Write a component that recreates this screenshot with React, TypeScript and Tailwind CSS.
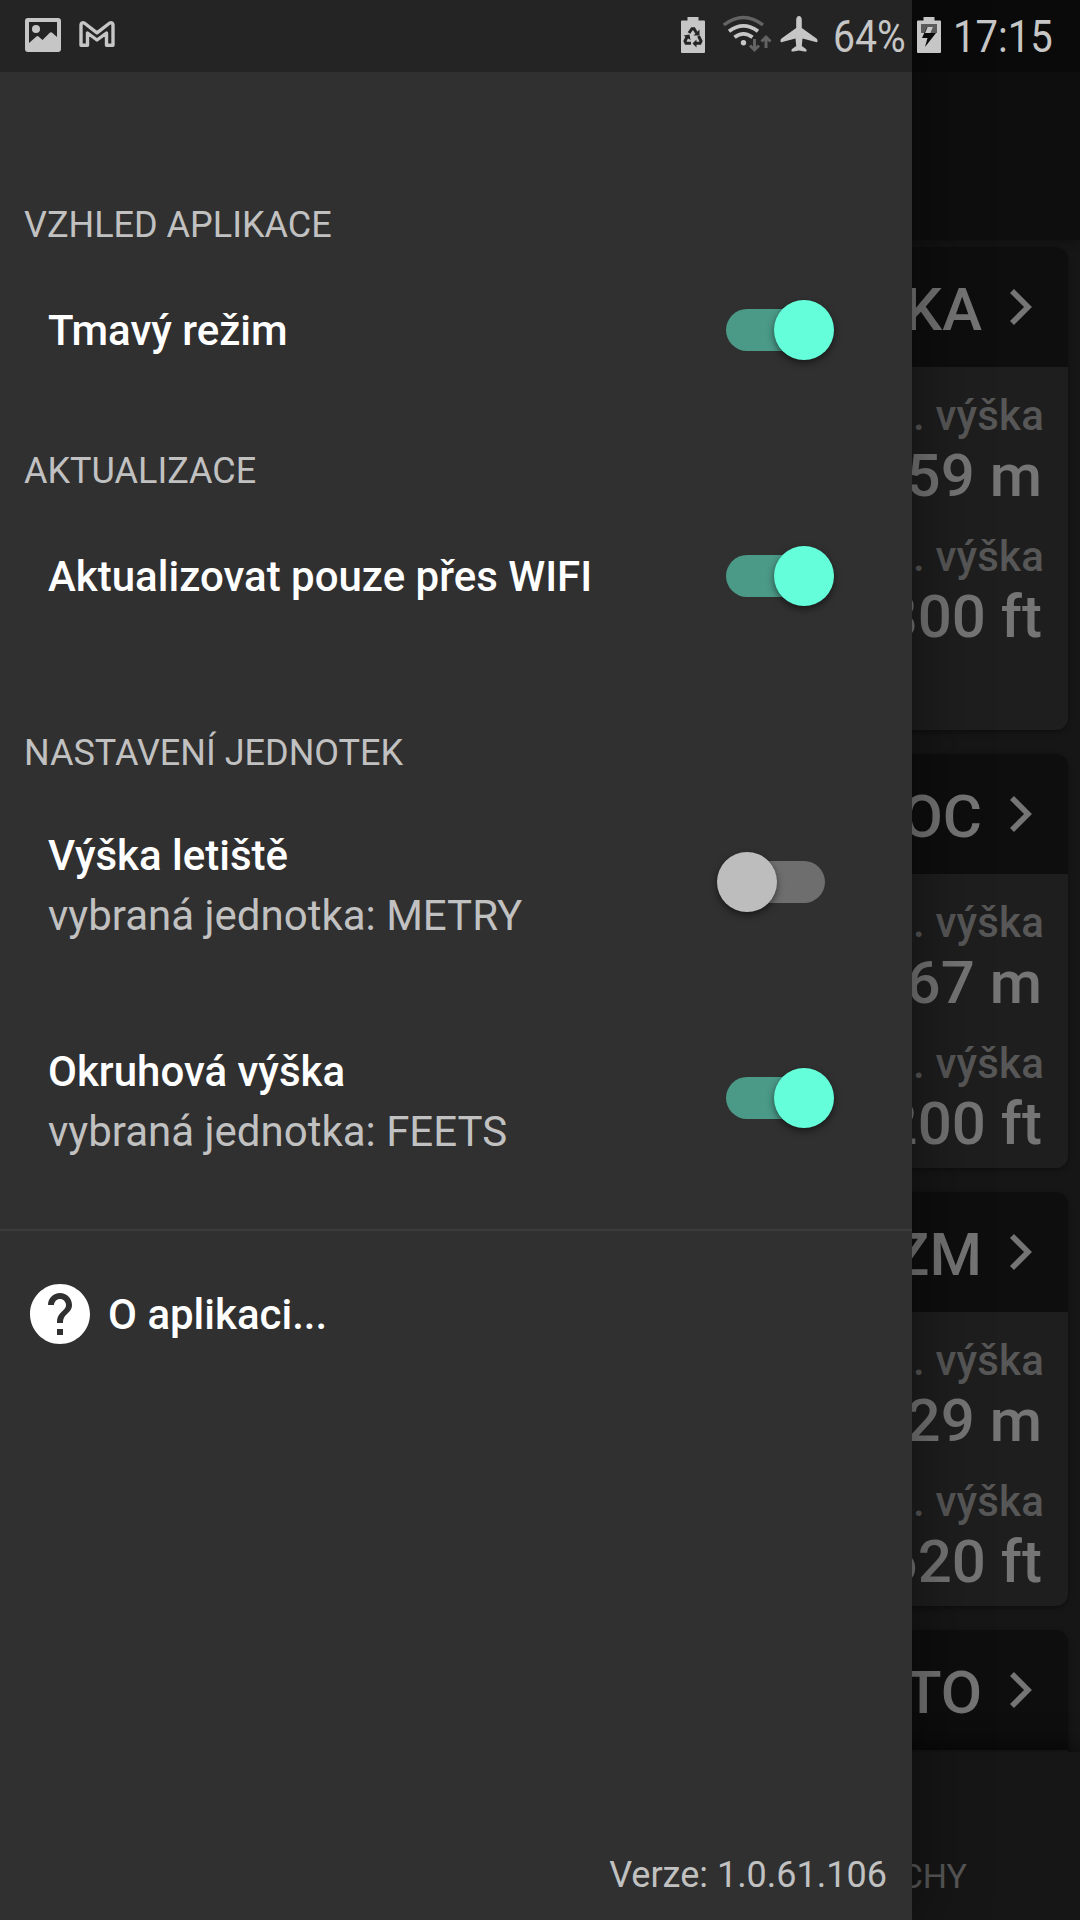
import React from "react";
import { MdHelp } from "react-icons/md";

function StatusIconsLeft() {
  return (
    <div className="flex items-center">
      <svg className="ml-[25px] h-[72px] w-[36px]" viewBox="0 0 36 72" fill="#c6c6c6">
        <path fillRule="evenodd" d="M3 18H33Q36 18 36 21V49Q36 52 33 52H3Q0 52 0 49V21Q0 18 3 18ZM4 22V43L11.500 36.500Q12.500 35.500 13.500 36.500L17.500 40L24.500 33Q26 31.500 27.500 33L32 37V22Z" />
        <circle cx="11" cy="29" r="4" />
      </svg>
      <svg className="ml-[18px] h-[72px] w-[36px]" viewBox="0 0 36 72" fill="none" stroke="#c6c6c6" strokeWidth="3.400" strokeLinejoin="round">
        <path d="M2 45.300V25Q2.300 22 5.300 23L18 32.800L30.700 23Q33.700 22 34 25V45.300H27.500V33L18 40L8.500 33V45.300Z" />
      </svg>
    </div>
  );
}

function StatusIconsRight() {
  return (
    <div className="flex items-center">
      <svg className="h-[72px] w-[24px]" viewBox="0 0 24 72">
        <path d="M6.500 17H17.500V20.500H23Q24 20.500 24 21.500V52Q24 53 23 53H1Q0 53 0 52V21.500Q0 20.500 1 20.500H6.500Z" fill="#c6c6c6" />
        <g fill="none" stroke="#242424" strokeWidth="3">
          <path d="M8 33L11 28.700H13L15.500 33M17.500 36L20 41L19 43.300H14M10 43.300H5L4 41L6 37" />
        </g>
        <path d="M18.500 29.500V35.500H12.500ZM15.500 39.500V47.500L11.500 43.500ZM2.500 35.500L8.500 34.500L9.500 40Z" fill="#242424" />
      </svg>
      <svg className="ml-[18px] h-[72px] w-[50px]" viewBox="0 0 50 72" fill="none" strokeWidth="3.400">
        <path d="M0.800 25Q20.500 10 40 25" stroke="#636363" />
        <path d="M6 31.300Q20.500 20.500 35 31.300M11.500 37.300Q20.500 30.500 29.500 37.300" stroke="#c6c6c6" strokeWidth="3.800" />
        <circle cx="20.500" cy="42.800" r="2.700" fill="#c6c6c6" />
        <path d="M31.500 39V50M27 45.500L31.500 50L36 45.500M43 48V37M38.500 41.500L43 37L47.500 41.500" stroke="#636363" strokeWidth="3" />
      </svg>
      <svg className="ml-[7px] h-[72px] w-[38px]" viewBox="0 0 38 72" fill="#c6c6c6">
        <path d="M19 16C20.800 16 21.800 17.800 21.800 20V28L36.500 38.500Q37.800 39.500 37.500 41.500Q37.200 42.500 35.800 42L22.500 38.500L21.800 46L26 49Q27 50.200 26.500 51.200Q26 51.800 24.500 51.500L19 50.500L13.500 51.500Q12 51.800 11.500 51.200Q11 50.200 12 49L16.200 46L15.500 38.500L2.200 42Q0.800 42.500 0.500 41.500Q0.200 39.500 1.500 38.500L16.200 28V20C16.200 17.800 17.200 16 19 16Z" />
      </svg>
    </div>
  );
}

function StatusBar() {
  return (
    <header className="absolute inset-x-0 top-0 z-20 flex h-[72px] items-center bg-black/25 text-[#c6c6c6]">
      <StatusIconsLeft />
      <div className="ml-[566px]">
        <StatusIconsRight />
      </div>
      <span className="ml-[15px] w-[74px] origin-left scale-x-[0.87] pt-[2px] text-[45px] leading-[72px] whitespace-nowrap">64%</span>
      <svg className="ml-[10px] h-[72px] w-[24px]" viewBox="0 0 24 72">
        <path d="M6.500 17H17.500V20.500H23Q24 20.500 24 21.500V52Q24 53 23 53H1Q0 53 0 52V21.500Q0 20.500 1 20.500H6.500Z" fill="#c6c6c6" />
        <path d="M4 24H20V33H4Z" fill="#5c5c5c" />
        <path d="M10 27H16L13.500 33H19L8 47L10.500 38H5Z" fill="#0a0a0a" />
        <path d="M10.500 27H16L13.500 33H8Z" fill="#c6c6c6" />
      </svg>
      <span className="ml-[12px] origin-left scale-x-[0.89] pt-[2px] text-[45px] leading-[72px] whitespace-nowrap">17:15</span>
    </header>
  );
}

function Switch({ on }: { on: boolean }) {
  return on ? (
    <div className="mr-[78px] flex h-[60px] w-[108px] items-center">
      <div className="h-[42px] w-[102px] rounded-full bg-[#4b9987]" />
      <div className="-ml-[54px] size-[60px] shrink-0 rounded-full bg-[#64ffda] shadow-[0_3px_7px_rgba(0,0,0,0.5)]" />
    </div>
  ) : (
    <div className="mr-[87px] flex h-[60px] w-[108px] items-center">
      <div className="z-10 size-[60px] shrink-0 rounded-full bg-[#bdbdbd] shadow-[0_3px_7px_rgba(0,0,0,0.5)]" />
      <div className="-ml-[54px] h-[42px] w-[102px] shrink-0 rounded-full bg-[#6e6e6e]" />
    </div>
  );
}

function SectionTitle({ children }: { children: React.ReactNode }) {
  return <h2 className="h-[42px] pl-[24px] text-[36px] leading-[42px] text-[#c1c1c1]">{children}</h2>;
}

function Setting({ title, detail, on }: { title: string; detail?: string; on: boolean }) {
  return (
    <div className="flex items-center justify-between pl-[48px] text-[42px]">
      <div className={detail ? "" : "pt-[2px]"}>
        <div className="leading-[48px] font-medium text-white">{title}</div>
        {detail && <div className="mt-[12px] leading-[48px] text-[#c1c1c1]">{detail}</div>}
      </div>
      <div className={detail ? "pb-[8px]" : ""}>
        <Switch on={on} />
      </div>
    </div>
  );
}

function Drawer() {
  return (
    <aside className="absolute inset-y-0 left-0 z-10 flex w-[912px] flex-col bg-[#303030] pt-[204px] shadow-[0_0_70px_rgba(0,0,0,0.45)]">
      <SectionTitle>VZHLED APLIKACE</SectionTitle>
      <div className="mt-[54px]">
        <Setting title="Tmavý režim" on />
      </div>
      <div className="mt-[90px]">
        <SectionTitle>AKTUALIZACE</SectionTitle>
      </div>
      <div className="mt-[54px]">
        <Setting title="Aktualizovat pouze přes WIFI" on />
      </div>
      <div className="mt-[126px]">
        <SectionTitle>NASTAVENÍ JEDNOTEK</SectionTitle>
      </div>
      <div className="mt-[58px]">
        <Setting title="Výška letiště" detail="vybraná jednotka: METRY" on={false} />
      </div>
      <div className="mt-[108px]">
        <Setting title="Okruhová výška" detail="vybraná jednotka: FEETS" on />
      </div>
      <div className="mt-[73px] h-[2px] bg-[#3c3c3c]" />
      <div className="mt-[48px] flex h-[70px] items-center pl-[24px]">
        <MdHelp className="size-[72px] text-white" />
        <span className="ml-[12px] pt-[2px] text-[42px] leading-[48px] font-medium text-white">O aplikaci...</span>
      </div>
      <div className="mt-auto mb-[24px] pr-[25px] text-right text-[36px] leading-[42px] text-[#c1c1c1]">Verze: 1.0.61.106</div>
    </aside>
  );
}

const airfields = [
  { name: "KA", height: "259 m", circuit: "1800 ft", box: "h-[483px]" },
  { name: "OC", height: "267 m", circuit: "1200 ft", box: "h-[414px]" },
  { name: "ZM", height: "229 m", circuit: "1620 ft", box: "h-[414px]" },
  { name: "TO", height: "", circuit: "", box: "h-[414px]" },
];

function AirfieldCard({ name, height, circuit, box }: (typeof airfields)[number]) {
  return (
    <article className={`${box} shrink-0 overflow-hidden rounded-[12px] bg-[#1e1e1e] text-right font-medium shadow-[0_2px_5px_rgba(0,0,0,0.35)]`}>
      <div className="flex h-[120px] items-center justify-end bg-[#0e0e0e] pr-[35px] text-[#757575]">
        <span className="pt-[5px] text-[60px] leading-[70px]">{name}</span>
        <svg className="ml-[27px] h-[38px] w-[24px]" viewBox="0 0 24 38" fill="none" stroke="#757575" strokeWidth="5.600">
          <path d="M3 3L19 19L3 35" />
        </svg>
      </div>
      {height && (
        <div className="pt-[25px] pr-[24px]">
          <div className="text-[42px] leading-[48px] tracking-[0.2px] text-[#575757]">. výška</div>
          <div className="mt-[3px] pr-[2px] text-[60px] leading-[66px] text-[#757575]">{height}</div>
          <div className="mt-[24px] text-[42px] leading-[48px] tracking-[0.2px] text-[#575757]">. výška</div>
          <div className="mt-[3px] pr-[2px] text-[60px] leading-[66px] text-[#757575]">{circuit}</div>
        </div>
      )}
    </article>
  );
}

export default function App() {
  return (
    <div className="relative h-[1920px] w-[1080px] overflow-hidden bg-[#161616] font-['Roboto',sans-serif]">
      <main className="flex h-full flex-col">
        <div className="h-[240px] shrink-0 bg-[#0e0e0e] shadow-[0_0_10px_rgba(0,0,0,0.4)]" />
        <div className="flex h-[1512px] flex-col gap-[24px] overflow-hidden px-[12px] pt-[7px]">
          {airfields.map((a) => (
            <AirfieldCard key={a.name} {...a} />
          ))}
        </div>
        <nav className="flex h-[168px] shrink-0 justify-end bg-[#161616] pt-[103px] pr-[113px] text-[34px] leading-[42px] text-[#575757] shadow-[0_-4px_24px_rgba(0,0,0,0.6)]">
          CHY
        </nav>
      </main>
      <Drawer />
      <StatusBar />
    </div>
  );
}
